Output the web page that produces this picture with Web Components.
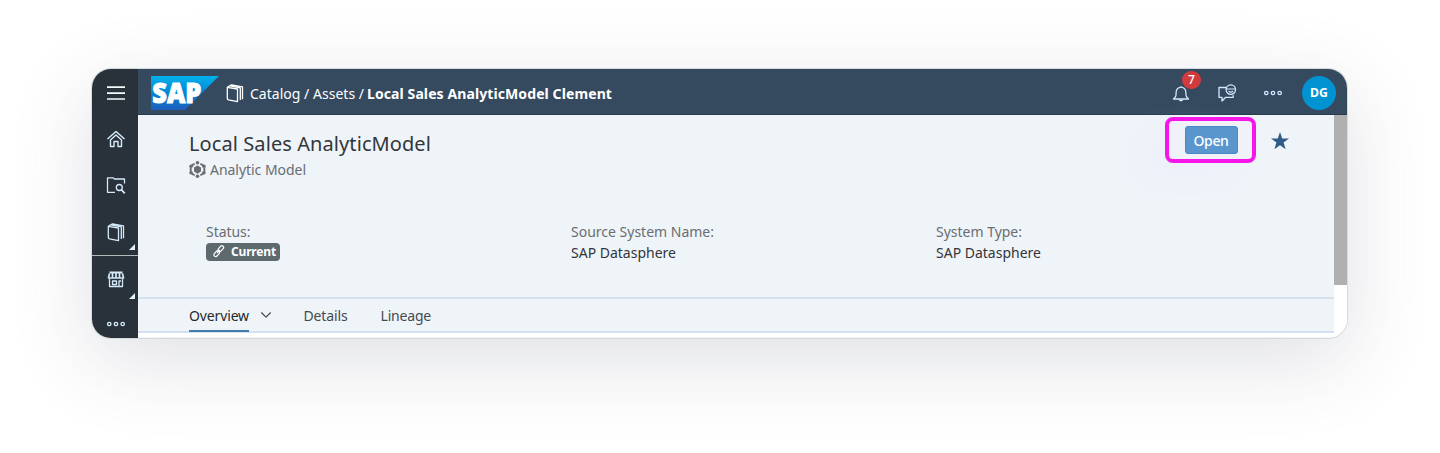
<!DOCTYPE html>
<html lang="en">
<head>
<meta charset="utf-8">
<title>Catalog</title>
<style>
html,body{margin:0;height:453px;overflow:hidden;background:#fff;font-family:"Noto Sans","Open Sans",sans-serif;font-size:14px}
body{box-sizing:border-box;padding:69px 93px 115px 92px}
</style>
</head>
<body>
<catalog-window>
  <side-nav slot="nav"></side-nav>
  <shell-bar slot="bar"></shell-bar>
  <asset-page slot="page"></asset-page>
</catalog-window>
<script>
const define = (name, html, extra) => customElements.define(name, class extends HTMLElement {
  connectedCallback() {
    if (this.shadowRoot) return;
    const t = document.createElement('template');
    t.innerHTML = html;
    this.attachShadow({mode: 'open'}).append(t.content.cloneNode(true));
    if (extra) extra(this);
  }
});

define('catalog-window', `<style>
:host{display:grid;box-sizing:border-box;height:269px;grid-template-columns:46px minmax(0,1fr);grid-template-rows:46px minmax(0,1fr);border-radius:19px;overflow:hidden;background:#fff;
box-shadow:0 0 0 1px #d5dadd,0 22px 80px 2px rgba(62,66,92,.16)}
.nav{grid-row:1/3;display:grid}.bar,.page{display:grid;min-width:0;min-height:0}
</style><div class="nav"><slot name="nav"></slot></div><div class="bar"><slot name="bar"></slot></div><div class="page"><slot name="page"></slot></div>`);

define('side-nav', `<style>
:host{display:flex;flex-direction:column;box-sizing:border-box;padding-top:1px;background:#29313a;color:#d5eaf8}
div{display:grid;place-items:center;position:relative;height:46px;flex:none;padding-left:2px}
.line{border-bottom:1px solid #b4b8bb;box-sizing:border-box;height:48px}
.more::after{content:"";position:absolute;right:3px;bottom:5px;border-left:6px solid transparent;border-bottom:6px solid #e3f1f8}
.shop{height:45px}.shop.more::after{bottom:2px;}
</style>
<div><ui-icon name="menu" size="20"></ui-icon></div>
<div><ui-icon name="home" size="20"></ui-icon></div>
<div><ui-icon name="search" size="20"></ui-icon></div>
<div class="more line"><ui-icon name="book" size="20"></ui-icon></div>
<div class="more shop"><ui-icon name="shop" size="20"></ui-icon></div>
<div><ui-icon name="dots" size="20"></ui-icon></div>`);

define('shell-bar', `<style>
:host{display:flex;align-items:center;box-sizing:border-box;background:#354a5f;border-bottom:1px solid #273b50;color:#fff;padding:2px 11px 0 13px;font-size:14px}
sap-logo{margin-right:6px}
.crumb{display:flex;margin:1px 0 0 5px;gap:3px;align-items:center}
b{font-weight:700}
.actions{margin-left:auto;display:flex;align-items:center;color:#d1e8ff}
.bell{position:relative;display:flex;margin-right:26px}
count-badge{position:absolute;left:11px;top:-12px}
.chat{margin-right:26px}.dots{margin-right:19px}
</style>
<sap-logo></sap-logo><ui-icon name="book" size="20"></ui-icon>
<div class="crumb"><fit-text width="114">Catalog / Assets /</fit-text><b><fit-text width="245">Local Sales AnalyticModel Clement</fit-text></b></div>
<div class="actions"><span class="bell"><ui-icon name="bell" size="20"></ui-icon><count-badge>7</count-badge></span><ui-icon class="chat" name="chat" size="20"></ui-icon><ui-icon class="dots" name="dots" size="20"></ui-icon><user-avatar>DG</user-avatar></div>`);

define('sap-logo', `<style>:host{display:block;width:68px;height:34px}svg{display:block;overflow:visible;font-family:"Open Sans","Noto Sans",sans-serif}</style>
<svg width="68" height="34" viewBox="0 0 68 34"><defs><linearGradient id="g" x2="0" y2="1"><stop stop-color="#00b2ec"/><stop offset=".55" stop-color="#087fd2"/><stop offset="1" stop-color="#1d5fbb"/></linearGradient></defs><path fill="url(#g)" d="M0 0h68L34 34H0z"/><text x="1.300" y="27.300" fill="#fff" stroke="#fff" stroke-width="1" font-size="28" font-weight="800" textLength="49" lengthAdjust="spacingAndGlyphs">SAP</text></svg>`);

define('count-badge', `<style>:host{display:grid;place-items:center;width:19px;height:18px;border-radius:9px;background:#d23b3e;color:#fff;font-size:12px;font-weight:500;line-height:1}</style><slot></slot>`);

define('user-avatar', `<style>:host{display:grid;place-items:center;width:34px;height:34px;border-radius:50%;background:#0092d1;color:#fff;font-weight:700;font-size:12.3px;line-height:1}fit-text{margin-top:2px}</style><fit-text width="18"><slot></slot></fit-text>`);

define('asset-page', `<style>
:host{display:grid;grid-template-columns:minmax(0,1fr) 13px;color:#32363a;min-height:0}
.col{display:flex;flex-direction:column;background:#eff4f9;min-width:0;min-height:0}
.head{display:flex;height:70px;box-sizing:border-box;padding:0 45px 0 51px;justify-content:space-between}
h1{margin:15px 0 0;font-size:20px;font-weight:400;line-height:28px}
.type{display:flex;align-items:center;gap:4px;color:#6a6d70;font-size:14px;line-height:19px;margin-top:2px}
.tools{display:flex;align-items:flex-start;padding-top:2px}
.tools ui-icon{margin:15px 0 0 15px}
.facts{display:grid;grid-template-columns:365px 365px 1fr;height:114px;box-sizing:border-box;padding:36px 0 0 68px;border-bottom:2px solid #d3e1f0}
.bottom{height:4px;background:#fff}
.track{background:#fff}.thumb{height:170px;background:#b0b0b0}
</style>
<div class="col">
<div class="head"><div><h1><fit-text width="242">Local Sales AnalyticModel</fit-text></h1><div class="type"><ui-icon name="hexagon" size="17"></ui-icon><fit-text width="96">Analytic Model</fit-text></div></div>
<div class="tools"><open-action></open-action><ui-icon name="star" size="18"></ui-icon></div></div>
<div class="facts">
<object-fact><fit-text slot="label" width="44.5">Status:</fit-text><status-tag></status-tag></object-fact>
<object-fact><fit-text slot="label" width="143">Source System Name:</fit-text><fit-text width="105">SAP Datasphere</fit-text></object-fact>
<object-fact><fit-text slot="label" width="86">System Type:</fit-text><fit-text width="105">SAP Datasphere</fit-text></object-fact>
</div>
<tab-strip></tab-strip><div class="bottom"></div>
</div><div class="track"><div class="thumb"></div></div>`);

define('open-action', `<style>
:host{display:grid;place-items:center;box-sizing:border-box;width:91px;height:46px;border:4px solid #f716e9;border-radius:8px;background:#f0f1f9;box-shadow:-22px 14px 30px -4px rgba(238,230,250,.4)}
button{all:unset;box-sizing:border-box;width:53px;height:28px;margin-left:1px;border-radius:3px;background:#5896cd;border:1px solid #4a89c3;color:#fff;text-align:center;line-height:25px;font-size:14px;font-weight:500}
</style><button><fit-text width="35">Open</fit-text></button>`);

define('object-fact', `<style>:host{display:flex;flex-direction:column;align-items:flex-start;line-height:21px;font-size:14px}.l{color:#6a6d70;height:21px}</style><div class="l"><slot name="label"></slot></div><slot></slot>`);

define('status-tag', `<style>:host{display:flex;box-sizing:border-box;align-items:center;width:74px;height:18px;margin-top:1px;padding:0 4px 1px 6px;gap:6px;border-radius:4px;background:#5e696e;color:#fff;font-weight:700;font-size:12px;line-height:16px}</style><ui-icon name="link" size="13"></ui-icon><fit-text width="45">Current</fit-text>`);

define('tab-strip', `<style>
:host{display:flex;box-sizing:border-box;height:34px;padding-left:51px;border-bottom:2px solid #d3e1f0;line-height:33px;font-size:14px;color:#45494d}
.on{color:#26292c;height:33px;box-sizing:border-box;border-bottom:2px solid #427cac;width:60px}
ui-icon{margin:10px 31.500px 0 11px}.t{margin-right:33px}
</style><div class="on"><fit-text width="60">Overview</fit-text></div><ui-icon name="down" size="12"></ui-icon><div class="t"><fit-text width="44">Details</fit-text></div><div><fit-text width="50.5">Lineage</fit-text></div>`);

const icons = {
menu:['20 20','<path d="M1 4.200h18M1 10.200h18M1 16h18" stroke="#f3fafd" stroke-width="1.700"/>'],
home:['20 20','<path d="M1.500 10 10 2.500l8.500 7.500" stroke-width="1.500"/><path d="M4.500 11v6.500H8v-5h4v5h3.500V11L10 6z" stroke-width="1.400"/>'],
search:['20 20','<path d="M18.500 8.500V4H8.500L7 2.800H1.500v14.500h7.500"/><circle cx="13.300" cy="12.500" r="3"/><path d="m15.500 14.800 3.300 3.500" stroke-width="1.700"/>'],
book:['20 20','<path d="M2.300 4.300 12.500 6v12.700L3.500 16.800q-1.200-.3-1.200-1.500zM2.500 4.100 6.500 1.800l11 2v12.500M5 2.900l10.300 2v12.200" stroke-width="1.300"/>'],
shop:['20 20','<path d="M3.500 2.500h13v2h-13z" fill="currentColor" stroke="none"/><path d="M3.500 4.500 2.500 9h15l-1-4.500M6.500 4v5M10 4v5M13.500 4v5" stroke-width="1.700"/><path d="M3.500 10v7.500h13V10M6.500 12h4v3.500h-4zM13 17.500V12h2"/>'],
dots:['20 20','<circle cx="3.300" cy="10" r="1.700"/><circle cx="10" cy="10" r="1.700"/><circle cx="16.700" cy="10" r="1.700"/>'],
bell:['20 20','<path d="M2.500 16h15c-2.500-2.500-2.600-3-2.600-6 0-3.500-1.700-5.200-4-5.600a1 1 0 0 0-1.800 0c-2.300.4-4 2.100-4 5.600 0 3-.1 3.500-2.600 6z"/><path d="M7.500 16.500c.5 2.400 4.500 2.400 5 0z" fill="currentColor" stroke="none"/>'],
chat:['20 20','<path d="M9 4.500H2v9.800h3v3.700l3.700-3.700h7.500v-2"/><circle cx="13.800" cy="6.600" r="4.700"/><path d="M9.300 6h9M11.500 8.300q2.300 1.600 4.600 0" stroke-width="1.200"/>'],
star:['18 18','<path fill="#2f5d87" stroke="none" d="m9 0 2.200 6.400H18l-5.400 4.200 2 6.700L9 13.300l-5.600 4 2-6.700L0 6.400h6.800z"/>'],
down:['12 12','<path d="m1.300 3.500 4.700 4.700 4.700-4.700" stroke-width="1.200"/>'],
link:['14 14','<rect x="6" y="2" width="7" height="3.800" rx="1.900" transform="rotate(-48 9.500 3.900)"/><rect x="1.500" y="7.500" width="7" height="3.800" rx="1.900" transform="rotate(-48 5 9.400)"/><path d="m5.500 8.500 3-3.300"/>'],
hexagon:['18 18','<path d="M9 4.800 12.700 7v4.200L9 13.400l-3.700-2.200V7z" fill="currentColor" stroke="none"/><path d="M6 2.900 3 4.600M12 2.900l3 1.700M1.800 7v4M16.200 7v4M3 13.400l3 1.700M12 15.100l3-1.700" stroke-width="2"/><g fill="currentColor" stroke="none"><circle cx="9" cy="1.900" r="1.900"/><circle cx="9" cy="16.100" r="1.900"/><circle cx="2.200" cy="5.500" r="1.900"/><circle cx="15.800" cy="5.500" r="1.900"/><circle cx="2.200" cy="12.500" r="1.900"/><circle cx="15.800" cy="12.500" r="1.900"/></g>']
};
define('ui-icon', `<style>:host{display:block;flex:none}svg{display:block}</style><svg fill="none" stroke="currentColor" stroke-width="1.300" stroke-linejoin="round"></svg>`, el => {
  const svg = el.shadowRoot.querySelector('svg'), [box, art] = icons[el.getAttribute('name')], s = el.getAttribute('size');
  svg.setAttribute('viewBox', '0 0 ' + box); svg.setAttribute('width', s); svg.setAttribute('height', s); svg.innerHTML = art;
});

// Tracks a single-line label out or in so that it fills the given width.
define('fit-text', `<style>:host{display:inline-block;white-space:nowrap}span{display:inline-block}</style><span><slot></slot></span>`, el => {
  const span = el.shadowRoot.querySelector('span'), w = +el.getAttribute('width');
  const slot = el.querySelector('slot');
  const text = slot ? slot.assignedNodes().map(n => n.textContent).join('') : el.textContent;
  const natural = span.getBoundingClientRect().width;
  span.style.letterSpacing = (w - natural) / text.length + 'px';
  el.style.width = w + 'px';
});
</script>
</body>
</html>
